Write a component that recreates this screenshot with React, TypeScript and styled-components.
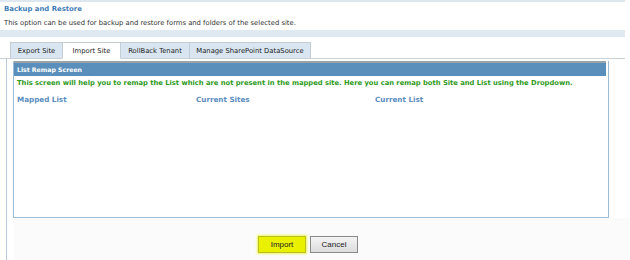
import React from "react";
import styled, { createGlobalStyle } from "styled-components";

const Global = createGlobalStyle`
  html, body { margin: 0; padding: 0; background: #ffffff; }
  body { font-family: "DejaVu Sans", Verdana, sans-serif; width: 630px; height: 260px; overflow: hidden; }
`;

const Page = styled.div`
  width: 630px;
  height: 260px;
  display: flex;
  flex-direction: column;
`;

const TopRule = styled.div`
  width: 625px;
  height: 2px;
  background: #dde7ef;
`;

const Header = styled.div`
  padding: 3px 0 0 4px;
  height: 27px;
  box-sizing: border-box;
`;

const Title = styled.div`
  font-size: 6.9px;
  font-weight: bold;
  color: #3f7cb6;
  line-height: 9px;
`;

const Desc = styled.div`
  font-size: 6.8px;
  color: #333;
  line-height: 9px;
  margin-top: 5px;
`;

const Band = styled.div`
  width: 625px;
  height: 7px;
  background: #dfe9f2;
  margin-top: 1px;
`;

const TabRow = styled.div`
  display: flex;
  align-items: flex-end;
  margin-top: 4px;
  padding-left: 10px;
  width: 615px;
  height: 17px;
  border-bottom: 1px solid #c8cfd6;
`;

const Tab = styled.div<{ $active?: boolean; $w: number }>`
  height: ${(p) => (p.$active ? 17 : 16)}px;
  width: ${(p) => p.$w}px;
  box-sizing: border-box;
  display: flex;
  align-items: center;
  justify-content: center;
  font-size: 6.8px;
  color: #222;
  background: ${(p) => (p.$active ? "#ffffff" : "#d9e6f1")};
  border: 1px solid #c4ccd4;
  border-bottom: ${(p) => (p.$active ? "1px solid #ffffff" : "none")};
  margin-bottom: ${(p) => (p.$active ? -1 : 0)}px;
  margin-right: -1px;
  position: relative;
`;

const Outer = styled.div`
  flex: 1;
  margin-left: 6px;
  border-left: 1px solid #b5c9da;
  display: flex;
  flex-direction: column;
  padding: 2px 0 0 6px;
`;

const Inner = styled.div`
  width: 596px;
  height: 157px;
  box-sizing: border-box;
  border: 1px solid #9dbad6;
  border-top: none;
  display: flex;
  flex-direction: column;
`;

const Bar = styled.div`
  height: 15px;
  background: #5a8fbc;
  border-top: 2px solid #9aa3aa;
  margin-right: 2px;
  box-sizing: border-box;
  color: #ffffff;
  font-size: 6.2px;
  font-weight: bold;
  display: flex;
  align-items: center;
  padding-left: 3px;
`;

const Note = styled.div`
  color: #2f9a1c;
  font-size: 6.75px;
  font-weight: bold;
  padding: 3px 0 0 3px;
  line-height: 9px;
  white-space: nowrap;
`;

const Cols = styled.div`
  display: grid;
  grid-template-columns: 179px 179px 1fr;
  padding: 7px 0 0 3px;
`;

const ColHead = styled.div`
  color: #5b8ec2;
  font-size: 7.2px;
  font-weight: bold;
`;

const Footer = styled.div`
  flex: 1;
  margin-left: 1px;
  background: #fbfbfb;
  display: flex;
  justify-content: center;
  align-items: flex-start;
  padding-top: 18px;
  padding-right: 28px;
  gap: 4px;
`;

const Button = styled.button<{ $hl?: boolean }>`
  width: 48px;
  height: 17px;
  box-sizing: border-box;
  font-family: "Liberation Sans", Arial, sans-serif;
  font-size: 8px;
  color: #222;
  padding: 0;
  border: 1px solid ${(p) => (p.$hl ? "#b8c020" : "#8a8a8a")};
  background: ${(p) => (p.$hl ? "#e9f000" : "linear-gradient(#f4f4f4, #dcdcdc)")};
  box-shadow: ${(p) => (p.$hl ? "0 0 2px 1px #f0f560" : "none")};
`;

const tabs = [
  { label: "Export Site", w: 53 },
  { label: "Import Site", w: 59, active: true },
  { label: "RollBack Tenant", w: 70 },
  { label: "Manage SharePoint DataSource", w: 122 },
];

export default function App() {
  return (
    <Page>
      <Global />
      <TopRule />
      <Header>
        <Title>Backup and Restore</Title>
        <Desc>This option can be used for backup and restore forms and folders of the selected site.</Desc>
      </Header>
      <Band />
      <TabRow>
        {tabs.map((t) => (
          <Tab key={t.label} $active={t.active} $w={t.w}>
            {t.label}
          </Tab>
        ))}
      </TabRow>
      <Outer>
        <Inner>
          <Bar>List Remap Screen</Bar>
          <Note>
            This screen will help you to remap the List which are not present in the mapped site. Here you can remap both Site and List using the Dropdown.
          </Note>
          <Cols>
            <ColHead>Mapped List</ColHead>
            <ColHead>Current Sites</ColHead>
            <ColHead>Current List</ColHead>
          </Cols>
        </Inner>
        <Footer>
          <Button $hl>Import</Button>
          <Button>Cancel</Button>
        </Footer>
      </Outer>
    </Page>
  );
}
